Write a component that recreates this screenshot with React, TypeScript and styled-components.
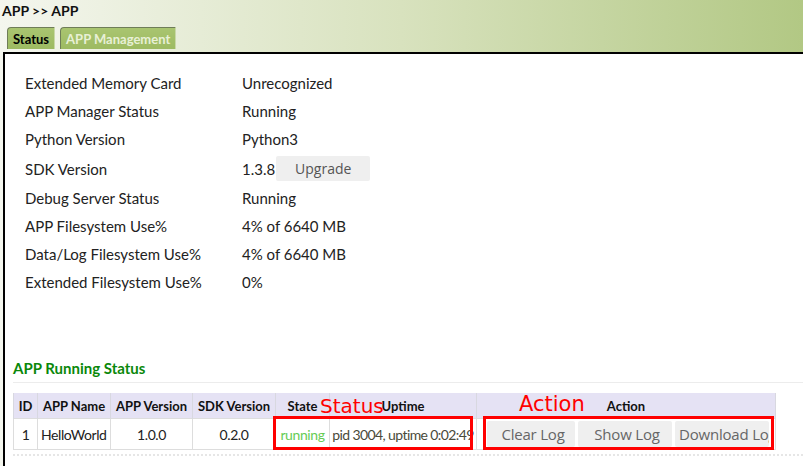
import React from "react";
import styled, { createGlobalStyle } from "styled-components";

const Global = createGlobalStyle`
  html, body { margin: 0; padding: 0; }
  body {
    background: linear-gradient(to right, #f4f6ee 0%, #d8e2be 50%, #b2c884 100%);
    font-family: Lato, "Noto Sans", sans-serif;
    color: #222;
    width: 803px;
    height: 466px;
    overflow: hidden;
  }
`;

const Page = styled.div`
  display: flex;
  flex-direction: column;
  height: 466px;
`;

const Header = styled.div`
  display: flex;
  flex-direction: column;
  padding: 2px 0 0 2px;
  height: 50px;
  box-sizing: border-box;
`;

const Title = styled.div`
  font-weight: 700;
  font-size: 14px;
  color: #111;
  line-height: 18px;
`;

const Tabs = styled.div`
  display: flex;
  gap: 5px;
  margin: 7px 0 0 5px;
`;

const Tab = styled.div<{ $active?: boolean }>`
  height: 22px;
  box-sizing: border-box;
  padding: 0 5px;
  display: flex;
  align-items: center;
  font-size: 13px;
  font-weight: 700;
  background: linear-gradient(to bottom, #a9c570, #9dba62);
  border-top: 1px solid #6f7d58;
  border-left: 1px solid #6f7d58;
  border-right: 1px solid #c9d8a8;
  border-top-left-radius: 4px;
  color: ${(p) => (p.$active ? "#000" : "#e8f0d6")};
`;

const Panel = styled.div`
  flex: 1;
  margin: 2px 0 0 3px;
  background: #fff;
  border-top: 2px solid #000;
  border-left: 2px solid #000;
  padding: 15px 0 0 8px;
  display: flex;
  flex-direction: column;
`;

const InfoList = styled.div`
  display: grid;
  grid-template-columns: 217px 1fr;
  padding-left: 12px;
  font-size: 15px;
  color: #222;
`;

const InfoRow = styled.div<{ $tall?: boolean }>`
  display: contents;
  & > div {
    height: ${(p) => (p.$tall ? "31px" : "28px")};
    display: flex;
    align-items: center;
  }
`;

const Cell = styled.div``;

const Upgrade = styled.button`
  height: 25px;
  width: 94px;
  margin-left: 1px;
  border: none;
  border-radius: 2px;
  background: #efefef;
  color: #555;
  font-family: "Open Sans", sans-serif;
  font-size: 14px;
  padding: 0;
`;

const SectionTitle = styled.div`
  margin-top: 62px;
  font-size: 15px;
  font-weight: 700;
  color: #0a880a;
  height: 20px;
  line-height: 20px;
  padding-bottom: 4px;
  border-bottom: 1px solid #ececec;
`;

const TableWrap = styled.div`
  position: relative;
  margin-top: 10px;
  width: 762px;
`;

const Table = styled.table`
  border-collapse: collapse;
  table-layout: fixed;
  width: 762px;
  font-size: 14px;
  letter-spacing: -0.4px;
`;

const Th = styled.th`
  background: #e5e2f4;
  height: 25px;
  font-size: 13px;
  font-weight: 700;
  letter-spacing: 0;
  color: #111;
  border-left: 1px solid #d8d8e0;
  border-right: 1px solid #d8d8e0;
  padding: 0;
  text-align: center;
  white-space: nowrap;
  overflow: hidden;
`;

const Td = styled.td<{ $align?: string; $color?: string; $tight?: boolean }>`
  height: 30px;
  border: 1px solid #ddd;
  padding: 0 ${(p) => (p.$tight ? "1px" : "3px")};
  text-align: ${(p) => p.$align || "center"};
  color: ${(p) => p.$color || "#222"};
  letter-spacing: ${(p) => (p.$tight ? "-0.6px" : "inherit")};
  white-space: nowrap;
  overflow: hidden;
`;

const ActionTd = styled.td`
  border: 1px solid #ddd;
  padding: 0 0 0 10px;
`;

const Actions = styled.div`
  display: flex;
  gap: 3px;
`;

const LogButton = styled.button<{ $w: number }>`
  width: ${(p) => p.$w}px;
  height: 26px;
  border: none;
  border-radius: 2px;
  background: #efefef;
  color: #666;
  font-family: "Open Sans", sans-serif;
  font-size: 15px;
  letter-spacing: -0.2px;
  padding: 0 0 0 4px;
  white-space: nowrap;
  overflow: hidden;
  text-align: center;
`;

const Dotted = styled.div`
  margin-top: 4px;
  border-top: 2px dotted #e6e6e6;
  width: 790px;
`;

const RedBox = styled.div`
  position: absolute;
  border: 3px solid #f00;
  box-sizing: border-box;
  pointer-events: none;
`;

const RedLabel = styled.div<{ $size: number }>`
  position: absolute;
  color: #f00;
  font-family: "DejaVu Sans", sans-serif;
  font-size: ${(p) => p.$size}px;
  line-height: 1;
  pointer-events: none;
`;

const info: [string, string][] = [
  ["Extended Memory Card", "Unrecognized"],
  ["APP Manager Status", "Running"],
  ["Python Version", "Python3"],
  ["SDK Version", "1.3.8"],
  ["Debug Server Status", "Running"],
  ["APP Filesystem Use%", "4% of 6640 MB"],
  ["Data/Log Filesystem Use%", "4% of 6640 MB"],
  ["Extended Filesystem Use%", "0%"],
];

export default function App() {
  return (
    <>
      <Global />
      <Page>
        <Header>
          <Title>APP &gt;&gt; APP</Title>
          <Tabs>
            <Tab $active>Status</Tab>
            <Tab>APP Management</Tab>
          </Tabs>
        </Header>
        <Panel>
          <InfoList>
            {info.map(([k, v]) => (
              <InfoRow key={k} $tall={k === "SDK Version"}>
                <Cell>{k}</Cell>
                <Cell>
                  {v}
                  {k === "SDK Version" && <Upgrade>Upgrade</Upgrade>}
                </Cell>
              </InfoRow>
            ))}
          </InfoList>
          <SectionTitle>APP Running Status</SectionTitle>
          <TableWrap>
            <Table>
              <colgroup>
                <col style={{ width: 24 }} />
                <col style={{ width: 73 }} />
                <col style={{ width: 82 }} />
                <col style={{ width: 83 }} />
                <col style={{ width: 54 }} />
                <col style={{ width: 147 }} />
                <col style={{ width: 299 }} />
              </colgroup>
              <thead>
                <tr>
                  <Th>ID</Th>
                  <Th>APP Name</Th>
                  <Th>APP Version</Th>
                  <Th>SDK Version</Th>
                  <Th>State</Th>
                  <Th>Uptime</Th>
                  <Th>Action</Th>
                </tr>
              </thead>
              <tbody>
                <tr>
                  <Td>1</Td>
                  <Td $align="left">HelloWorld</Td>
                  <Td>1.0.0</Td>
                  <Td>0.2.0</Td>
                  <Td $color="#66cc55">running</Td>
                  <Td $color="#4a4a3a" $tight>pid 3004, uptime 0:02:49</Td>
                  <ActionTd>
                    <Actions>
                      <LogButton $w={88}>Clear Log</LogButton>
                      <LogButton $w={94}>Show Log</LogButton>
                      <LogButton $w={94}>Download Log</LogButton>
                    </Actions>
                  </ActionTd>
                </tr>
              </tbody>
            </Table>
            <RedLabel $size={20} style={{ left: 307, top: 3 }}>Status</RedLabel>
            <RedBox style={{ left: 260, top: 23, width: 200, height: 34 }} />
            <RedLabel $size={21} style={{ left: 506, top: 1 }}>Action</RedLabel>
            <RedBox style={{ left: 470, top: 23, width: 291, height: 34 }} />
          </TableWrap>
          <Dotted />
        </Panel>
      </Page>
    </>
  );
}
